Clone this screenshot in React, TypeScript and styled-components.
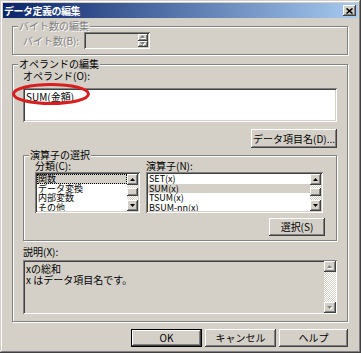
import React from "react";
import styled, { createGlobalStyle, css } from "styled-components";

const GlobalStyle = createGlobalStyle`
  html, body {
    margin: 0;
    padding: 0;
    background: #d4d0c8;
  }
  body {
    font-family: "Noto Sans CJK JP", "Liberation Sans", sans-serif;
    font-size: 10px;
    color: #000;
  }
  * {
    box-sizing: border-box;
  }
`;

const raised = css`
  box-shadow: inset -1px -1px #404040, inset 1px 1px #fff, inset -2px -2px #808080;
`;

const sunken = css`
  box-shadow: inset 1px 1px #808080, inset -1px -1px #fff, inset 2px 2px #404040,
    inset -2px -2px #d4d0c8;
`;

const Window = styled.div`
  width: 361px;
  height: 353px;
  padding: 3px;
  background: #d4d0c8;
  display: flex;
  flex-direction: column;
  box-shadow: inset -1px -1px #404040, inset 1px 1px #d4d0c8, inset -2px -2px #808080,
    inset 2px 2px #fff;
`;

const TitleBar = styled.div`
  height: 15px;
  display: flex;
  align-items: center;
  justify-content: space-between;
  padding: 0 2px 0 1px;
  background: linear-gradient(to right, #0a246a, #a6caf0);
`;

const TitleText = styled.span`
  color: #fff;
  font-weight: bold;
  font-size: 10px;
  line-height: 15px;
  letter-spacing: -0.5px;
`;

const CloseButton = styled.div`
  width: 13px;
  height: 11px;
  background: #d4d0c8;
  display: flex;
  align-items: center;
  justify-content: center;
  ${raised}
`;

const Body = styled.div`
  flex: 1;
  display: flex;
  flex-direction: column;
  padding: 0 10px 0 9px;
`;

const Group = styled.div<{ $gap?: number }>`
  position: relative;
  border: 1px solid #808080;
  box-shadow: inset 1px 1px #fff, 1px 1px #fff;
  margin-top: ${(p) => p.$gap ?? 0}px;
  display: flex;
  flex-direction: column;
`;

const Legend = styled.span<{ $disabled?: boolean }>`
  position: absolute;
  top: -7px;
  left: 5px;
  padding: 0 1px;
  line-height: 12px;
  background: #d4d0c8;
  color: ${(p) => (p.$disabled ? "#808080" : "#000")};
  text-shadow: ${(p) => (p.$disabled ? "1px 1px #fff" : "none")};
`;

const ByteGroupInner = styled.div`
  height: 27px;
  display: flex;
  align-items: center;
  padding: 0 0 0 10px;
`;

const Label = styled.div<{ $disabled?: boolean; $width?: number }>`
  line-height: 12px;
  height: 12px;
  white-space: nowrap;
  width: ${(p) => (p.$width ? `${p.$width}px` : "auto")};
  color: ${(p) => (p.$disabled ? "#808080" : "#000")};
  text-shadow: ${(p) => (p.$disabled ? "1px 1px #fff" : "none")};
`;

const Spinner = styled.div`
  width: 66px;
  height: 17px;
  background: #d4d0c8;
  display: flex;
  justify-content: flex-end;
  padding: 2px;
  ${sunken}
`;

const SpinButtons = styled.div`
  width: 10px;
  display: flex;
  flex-direction: column;
`;

const SpinHalf = styled.div`
  flex: 1;
  background: #d4d0c8;
  display: flex;
  align-items: center;
  justify-content: center;
  ${raised}
`;

const OperandGroupInner = styled.div`
  display: flex;
  flex-direction: column;
  padding: 5px 10px 7px 10px;
`;

const Edit = styled.div<{ $height: number; $readonly?: boolean }>`
  height: ${(p) => p.$height}px;
  background: ${(p) => (p.$readonly ? "#d4d0c8" : "#fff")};
  padding: 2px 2px 2px 3px;
  display: flex;
  ${sunken}
`;

const EditText = styled.div<{ $lh: number }>`
  flex: 1;
  line-height: ${(p) => p.$lh}px;
  padding-top: 1px;
  white-space: pre;
`;

const Button = styled.div<{ $width: number; $height?: number; $default?: boolean }>`
  width: ${(p) => p.$width}px;
  height: ${(p) => p.$height ?? 18}px;
  background: #d4d0c8;
  display: flex;
  align-items: center;
  justify-content: center;
  line-height: 12px;
  white-space: nowrap;
  overflow: hidden;
  ${raised}
  ${(p) =>
    p.$default &&
    css`
      border: 1px solid #000;
    `}
`;

const RightButton = styled(Button)`
  align-self: flex-end;
  margin-top: 7px;
`;

const InnerGroupBody = styled.div`
  height: 84px;
  display: flex;
  flex-direction: column;
  padding: 4px 11px 0 11px;
`;

const ListRow = styled.div`
  display: flex;
  gap: 6px;
`;

const ListColumn = styled.div<{ $width: number }>`
  width: ${(p) => p.$width}px;
  display: flex;
  flex-direction: column;
`;

const ListBox = styled.div`
  height: 41px;
  background: #fff;
  padding: 2px;
  display: flex;
  ${sunken}
`;

const ListItems = styled.div`
  flex: 1;
  overflow: hidden;
`;

const ListItem = styled.div<{ $selected?: boolean; $focused?: boolean }>`
  height: 9.5px;
  line-height: 9.5px;
  font-size: 9px;
  padding-left: 1px;
  white-space: nowrap;
  background: ${(p) => (p.$selected ? "#d4d0c8" : "transparent")};
  ${(p) =>
    p.$focused &&
    css`
      outline: 1px dotted #000;
      outline-offset: -1px;
    `}
`;

const ScrollBar = styled.div`
  width: 11px;
  display: flex;
  flex-direction: column;
`;

const ScrollArrow = styled.div`
  height: 11px;
  background: #d4d0c8;
  display: flex;
  align-items: center;
  justify-content: center;
  ${raised}
`;

const Track = styled.div`
  flex: 1;
  background-color: #fff;
  background-image: conic-gradient(#d4d0c8 25%, #fff 0 50%, #d4d0c8 0 75%, #fff 0);
  background-size: 2px 2px;
  display: flex;
  flex-direction: column;
`;

const Thumb = styled.div<{ $top: number }>`
  height: 8px;
  margin-top: ${(p) => p.$top}px;
  background: #d4d0c8;
  ${raised}
`;

const SelectButton = styled(Button)`
  align-self: flex-end;
  margin-top: 5px;
`;

const DescLabel = styled(Label)`
  margin-top: 5px;
`;

const DescScroll = styled(ScrollBar)`
  width: 12px;
  margin: -1px -1px -1px 0;
`;

const ButtonRow = styled.div`
  display: flex;
  justify-content: flex-end;
  gap: 3px;
  margin-top: 7px;
`;

const Annotation = styled.svg`
  position: absolute;
  left: -3px;
  top: 16px;
  pointer-events: none;
`;

const Arrow = ({ dir, color = "#000" }: { dir: "up" | "down"; color?: string }) => (
  <svg width="5" height="3" viewBox="0 0 5 3">
    <path d={dir === "up" ? "M0 3H5L2.5 0Z" : "M0 0H5L2.5 3Z"} fill={color} />
  </svg>
);

const DisabledArrow = ({ dir }: { dir: "up" | "down" }) => (
  <svg width="6" height="4" viewBox="0 0 6 4">
    <path d={dir === "up" ? "M1 4H6L3.5 1Z" : "M1 1H6L3.5 4Z"} fill="#fff" />
    <path d={dir === "up" ? "M0 3H5L2.5 0Z" : "M0 0H5L2.5 3Z"} fill="#808080" />
  </svg>
);

const ListScroll = () => (
  <ScrollBar>
    <ScrollArrow>
      <Arrow dir="up" />
    </ScrollArrow>
    <Track>
      <Thumb $top={3} />
    </Track>
    <ScrollArrow>
      <Arrow dir="down" />
    </ScrollArrow>
  </ScrollBar>
);

const categories = ["関数", "データ変換", "内部変数", "その他"];
const operators = ["SET(x)", "SUM(x)", "TSUM(x)", "BSUM-nn(x)"];

export default function App() {
  return (
    <>
      <GlobalStyle />
      <Window>
        <TitleBar>
          <TitleText>データ定義の編集</TitleText>
          <CloseButton>
            <svg width="7" height="6" viewBox="0 0 7 6">
              <path d="M0.5 0.5L6.5 5.5M6.5 0.5L0.5 5.5" stroke="#000" strokeWidth="1.6" />
            </svg>
          </CloseButton>
        </TitleBar>
        <Body>
          <Group $gap={8}>
            <Legend $disabled>バイト数の編集</Legend>
            <ByteGroupInner>
              <Label $disabled $width={61}>
                バイト数(B):
              </Label>
              <Spinner>
                <SpinButtons>
                  <SpinHalf>
                    <DisabledArrow dir="up" />
                  </SpinHalf>
                  <SpinHalf>
                    <DisabledArrow dir="down" />
                  </SpinHalf>
                </SpinButtons>
              </Spinner>
            </ByteGroupInner>
          </Group>

          <Group $gap={9}>
            <Legend>オペランドの編集</Legend>
            <OperandGroupInner>
              <Label>オペランド(O):</Label>
              <Edit $height={34} style={{ marginTop: 6 }}>
                <EditText $lh={12}>SUM(金額)</EditText>
              </Edit>
              <RightButton $width={86} $height={19}>
                データ項目名(D)...
              </RightButton>

              <Group $gap={7}>
                <Legend>演算子の選択</Legend>
                <InnerGroupBody>
                  <ListRow>
                    <ListColumn $width={105}>
                      <Label>分類(C):</Label>
                      <ListBox>
                        <ListItems>
                          {categories.map((c, i) => (
                            <ListItem key={c} $selected={i === 0} $focused={i === 0}>
                              {c}
                            </ListItem>
                          ))}
                        </ListItems>
                        <ListScroll />
                      </ListBox>
                    </ListColumn>
                    <ListColumn $width={177}>
                      <Label>演算子(N):</Label>
                      <ListBox>
                        <ListItems>
                          {operators.map((o, i) => (
                            <ListItem key={o} $selected={i === 1}>
                              {o}
                            </ListItem>
                          ))}
                        </ListItems>
                        <ListScroll />
                      </ListBox>
                    </ListColumn>
                  </ListRow>
                  <SelectButton $width={56}>選択(S)</SelectButton>
                </InnerGroupBody>
              </Group>

              <DescLabel>説明(X):</DescLabel>
              <Edit $height={54} $readonly style={{ marginTop: 2 }}>
                <EditText $lh={11}>{"xの総和\nx はデータ項目名です。"}</EditText>
                <DescScroll>
                  <ScrollArrow>
                    <DisabledArrow dir="up" />
                  </ScrollArrow>
                  <Track />
                  <ScrollArrow>
                    <DisabledArrow dir="down" />
                  </ScrollArrow>
                </DescScroll>
              </Edit>
            </OperandGroupInner>
            <Annotation width="83" height="27" viewBox="0 0 83 27">
              <ellipse cx="41" cy="13" rx="37.5" ry="9.5" fill="none" stroke="#d81e1e" strokeWidth="3" />
            </Annotation>
          </Group>

          <ButtonRow>
            <Button $width={71} $default>
              OK
            </Button>
            <Button $width={71}>キャンセル</Button>
            <Button $width={69}>ヘルプ</Button>
          </ButtonRow>
        </Body>
      </Window>
    </>
  );
}
